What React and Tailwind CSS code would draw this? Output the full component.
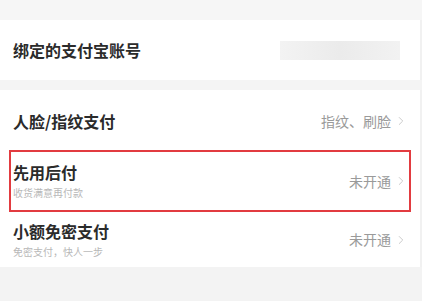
import {ChevronRight} from "lucide-react";

const font = {fontFamily: '"Noto Sans CJK SC", "Noto Sans", sans-serif'};

function Row({title, sub, value, boxed, height}) {
    const box = boxed
        ? "mx-[9px] border-2 border-[#e23b40] pl-[2px] pr-[1px]"
        : "pl-[13px] pr-[12px]";
    return (
        <div className={"flex items-center " + height + " " + box}>
            <div className="flex flex-col">
                <span className="text-[16px] leading-[20px] font-semibold text-[#2b2b2b]">{title}</span>
                {sub && <span className="text-[10px] leading-[14px] mt-[4px] text-[#b8b8b8]">{sub}</span>}
            </div>
            <div className="ml-auto flex items-center gap-[3px] text-[14px] text-[#9a9a9a]">
                <span>{value}</span>
                <ChevronRight size={14} strokeWidth={1.5} className="text-[#c4c4c4]"/>
            </div>
        </div>
    )
}

export default function App() {
    return (
        <div className="w-[422px] h-[301px] bg-[#f3f3f3] overflow-hidden" style={font}>
            <div className="h-[20px] bg-[#f6f6f6]"/>
            <div className="bg-white h-[60px] flex items-center pl-[13px] pr-[20px] border-r-2 border-[#f1f1f1]">
                <span className="text-[16px] font-semibold text-[#2b2b2b]">绑定的支付宝账号</span>
                <div className="ml-auto w-[120px] h-[19px] bg-gradient-to-r from-[#f3f3f3] via-[#ebebeb] to-[#f2f2f2]"/>
            </div>
            <div className="h-[10px] bg-[#f4f4f4]"/>
            <div className="bg-white border-r-2 border-[#f1f1f1]">
                <div className="h-[2px]"/>
                <Row title="人脸/指纹支付" value="指纹、刷脸" height="h-[58px]"/>
                <Row title="先用后付" sub="收货满意再付款" value="未开通" boxed height="h-[62px]"/>
                <Row title="小额免密支付" sub="免密支付，快人一步" value="未开通" height="h-[55px]"/>
            </div>
        </div>
    )
}
